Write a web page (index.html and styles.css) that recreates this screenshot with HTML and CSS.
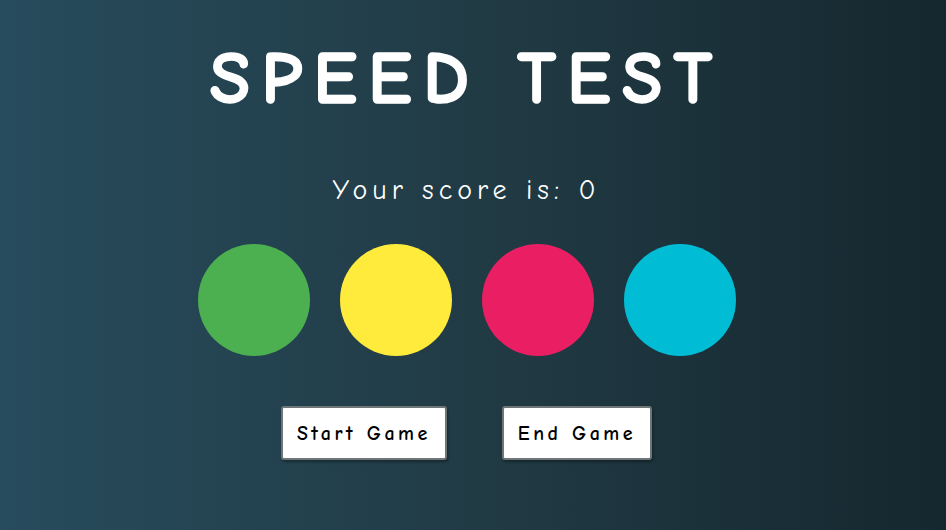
FILE: index.html
```html
<!DOCTYPE html>
<html>
<head>
<meta charset="utf-8">
<link rel="stylesheet" href="styles.css">
</head>
<body>
<main class="game">
  <h1 class="title">SPEED TEST</h1>
  <p class="score">Your score is: <span class="score-value">0</span></p>
  <div class="circles">
    <div class="circle circle-green"></div>
    <div class="circle circle-yellow"></div>
    <div class="circle circle-pink"></div>
    <div class="circle circle-cyan"></div>
  </div>
  <div class="buttons">
    <button class="btn">Start Game</button>
    <button class="btn">End Game</button>
  </div>
</main>
</body>
</html>
```
FILE: styles.css
```css
html, body {
  margin: 0;
  padding: 0;
  height: 100%;
}
body {
  background: linear-gradient(to right, #274c5d 0%, #213b45 50%, #15272f 100%);
  font-family: "Comic Sans MS", "Comic Neue", cursive, sans-serif;
  color: #fff;
  overflow: hidden;
}
.game {
  display: flex;
  flex-direction: column;
  align-items: center;
  padding-right: 13px;
}
.title {
  margin: 34px 0 0;
  font-size: 74px;
  line-height: 90px;
  letter-spacing: 11px;
  font-weight: bold;
  -webkit-text-stroke: 1.5px #fff;
}
.score {
  margin: 49px 0 0;
  font-size: 28px;
  line-height: 34px;
  letter-spacing: 5px;
}
.circles {
  display: flex;
  gap: 30px;
  margin-top: 37px;
}
.circle {
  width: 112px;
  height: 112px;
  border-radius: 50%;
}
.circle-green { background: #4caf50; }
.circle-yellow { background: #ffeb3b; }
.circle-pink { background: #e91e63; }
.circle-cyan { background: #00bcd4; }
.buttons {
  display: flex;
  gap: 55px;
  margin-top: 50px;
}
.btn {
  font-family: inherit;
  font-size: 20px;
  font-weight: bold;
  letter-spacing: 3.5px;
  padding: 0 14px;
  height: 54px;
  background: #fff;
  color: #000;
  border: 2px solid #6f7678;
  border-radius: 3px;
  box-shadow: 1px 2px 3px rgba(0,0,0,0.35);
}
```
